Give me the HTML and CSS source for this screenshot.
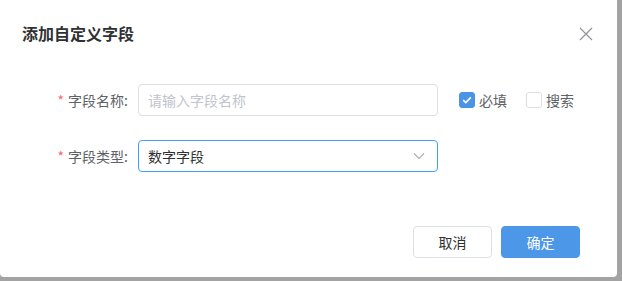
FILE: index.html
```html
<!DOCTYPE html>
<html lang="zh-CN">
<head>
    <meta charset="UTF-8">
    <title>添加自定义字段</title>
    <link rel="stylesheet" href="styles.css">
</head>
<body>
    <div class="dialog">
        <!-- 标题 -->
        <div class="dialog-header">
            <span class="dialog-title">添加自定义字段</span>
            <button class="close-btn" aria-label="关闭">
                <svg width="14" height="14" viewBox="0 0 14 14">
                    <path d="M1 1L13 13M13 1L1 13" stroke="#909399" stroke-width="1.2" fill="none"/>
                </svg>
            </button>
        </div>

        <!-- 表单 -->
        <div class="dialog-body">
            <div class="form-row">
                <label class="form-label"><span class="req">*</span>字段名称:</label>
                <input class="text-input" type="text" placeholder="请输入字段名称">
                <label class="check checked"><span class="box"><svg width="10" height="8" viewBox="0 0 10 8"><path d="M1.2 4.2L3.8 6.6L8.8 1.4" stroke="#fff" stroke-width="1.6" fill="none"/></svg></span>必填</label>
                <label class="check"><span class="box"></span>搜索</label>
            </div>
            <div class="form-row">
                <label class="form-label"><span class="req">*</span>字段类型:</label>
                <div class="select is-focus">
                    <span>数字字段</span>
                    <svg width="12" height="8" viewBox="0 0 12 8"><path d="M1 1.5L6 6.5L11 1.5" stroke="#a8abb2" stroke-width="1.1" fill="none"/></svg>
                </div>
            </div>
        </div>

        <!-- 按钮 -->
        <div class="dialog-footer">
            <button class="btn">取消</button>
            <button class="btn btn-primary">确定</button>
        </div>
    </div>
</body>
</html>
```

FILE: styles.css
```css
* { margin: 0; padding: 0; box-sizing: border-box; }
body {
    font-family: "Noto Sans CJK SC", "Noto Sans", sans-serif;
    background: #a3a3a3;
    width: 622px;
    height: 281px;
    overflow: hidden;
}
.dialog {
    width: 617px;
    height: 277px;
    background: #fff;
    border-radius: 0 0 4px 4px;
}
.dialog-header {
    display: flex;
    justify-content: space-between;
    align-items: center;
    padding: 21px 24px 0 22px;
    height: 45px;
}
.dialog-title {
    font-size: 16px;
    line-height: 24px;
    font-weight: bold;
    color: #303133;
}
.close-btn {
    border: none;
    background: none;
    width: 14px;
    height: 14px;
    display: flex;
    margin-top: 2px;
}
.dialog-body {
    padding-top: 39px;
    display: flex;
    flex-direction: column;
    gap: 24px;
}
.form-row {
    display: flex;
    align-items: center;
    height: 32px;
}
.form-label {
    width: 138px;
    flex-shrink: 0;
    padding-right: 10px;
    text-align: right;
    font-size: 14px;
    color: #606266;
}
.req { color: #f56c6c; margin-right: 4px; }
.text-input, .select {
    width: 300px;
    flex-shrink: 0;
    height: 32px;
    border: 1px solid #dcdfe6;
    border-radius: 4px;
    padding: 0 9px;
    font-family: inherit;
    font-size: 14px;
    color: #303133;
    outline: none;
}
.text-input::placeholder { color: #c0c4cc; }
.select {
    display: flex;
    align-items: center;
    justify-content: space-between;
    padding-right: 12px;
}
.select.is-focus { border-color: #409eff; }
.check {
    display: flex;
    align-items: center;
    flex-shrink: 0;
    font-size: 14px;
    color: #606266;
    margin-left: 21px;
}
.check + .check { margin-left: 19px; }
.box {
    width: 16px;
    height: 16px;
    flex-shrink: 0;
    border: 1px solid #dcdfe6;
    border-radius: 3px;
    margin-right: 4px;
    display: flex;
    align-items: center;
    justify-content: center;
}
.check.checked .box { background: #4a94e8; border-color: #4a94e8; }
.dialog-footer {
    display: flex;
    justify-content: flex-end;
    gap: 9px;
    padding: 54px 37px 0 0;
}
.btn {
    width: 79px;
    height: 32px;
    border: 1px solid #dcdfe6;
    border-radius: 4px;
    background: #fff;
    color: #303133;
    font-family: inherit;
    font-size: 14px;
}
.btn-primary {
    background: #4d97e8;
    border-color: #4d97e8;
    color: #fff;
}
```
